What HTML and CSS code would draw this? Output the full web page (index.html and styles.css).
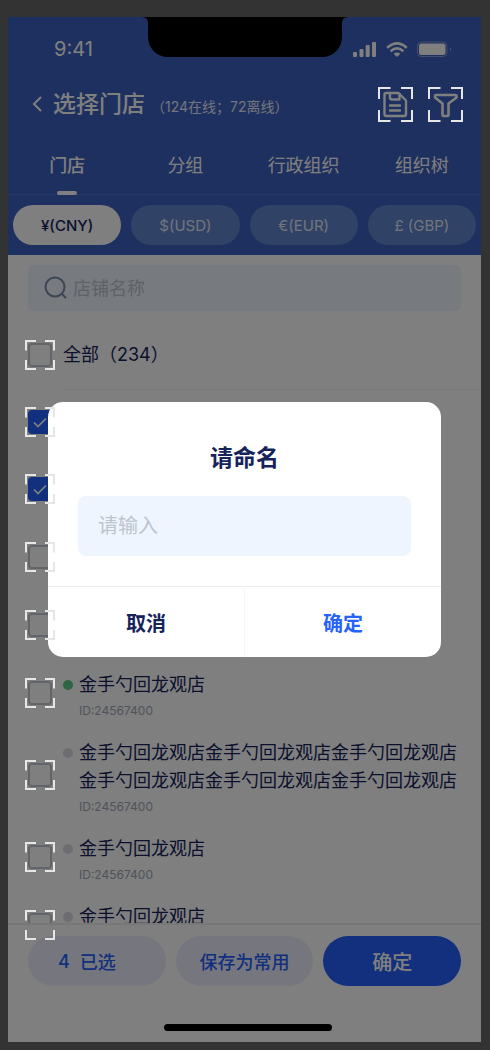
FILE: index.html
```html
<!DOCTYPE html>
<html lang="zh-CN">
<head>
<meta charset="utf-8">
<meta name="viewport" content="width=device-width, initial-scale=1">
<title>选择门店</title>
<link rel="stylesheet" href="styles.css">
</head>
<body>
<svg class="defs" aria-hidden="true">
  <symbol id="corners" viewBox="0 0 30 30"><path d="M1 10.500V1H11M20 1H29V10.500M29 20V29H20M11 29H1V20" fill="none" stroke="currentColor" stroke-width="2"/></symbol>
  <symbol id="corners-large" viewBox="0 0 35 35"><path d="M1 12V1H12.500M23 1H34V12M34 23V34H23M12.500 34H1V23" fill="none" stroke="currentColor" stroke-width="2"/></symbol>
  <symbol id="tick" viewBox="0 0 24 24"><path d="M6 12.500L10 16.500L18 8.500" fill="none" stroke="currentColor" stroke-width="1.700"/></symbol>
</svg>
<div class="phone">
  <header class="header">
    <div class="status">
      <span class="time">9:41</span>
      <svg class="notch" viewBox="0 0 206 40" aria-hidden="true"><path d="M0 0H206Q200 0 200 6V20A20 20 0 0 1 180 40H26A20 20 0 0 1 6 20V6Q6 0 0 0Z"/></svg>
      <svg class="status-icons" viewBox="0 0 99 18" aria-hidden="true">
        <g fill="currentColor">
          <rect x="0" y="12" width="4" height="5" rx="1"/><rect x="6.500" y="9" width="4" height="8" rx="1"/><rect x="12.700" y="5" width="4" height="12" rx="1"/><rect x="19" y="2" width="4" height="15" rx="1"/>
          <rect x="66" y="3.500" width="26.500" height="11.500" rx="2.500"/>
          <path d="M97 7Q99.500 9.200 97 11.500Z" opacity=".4"/>
          <path d="M44 17L40.600 13.800Q44 11 47.400 13.800Z"/>
        </g>
        <rect x="64.500" y="2" width="29.500" height="14.500" rx="4" fill="none" stroke="currentColor" opacity=".4"/>
        <path d="M34.200 7.800Q44-1 53.800 7.800M37.600 11.200Q44 5.500 50.400 11.200" fill="none" stroke="currentColor" stroke-width="2.600"/>
      </svg>
    </div>
    <div class="titlebar">
      <button class="back" aria-label="返回"><svg viewBox="0 0 10 16"><path d="M9 1L2 8L9 15" fill="none" stroke="currentColor" stroke-width="2"/></svg></button>
      <h1 class="title">选择门店</h1>
      <span class="count">（124在线；72离线）</span>
      <div class="tools">
        <button class="tool" aria-label="保存">
          <svg class="glyph" viewBox="0 0 35 35"><g fill="none" stroke="currentColor" stroke-width="2.400" stroke-linejoin="round" stroke-linecap="round"><path d="M8 6H20.500L28 13.500V27Q28 29 26 29H8.500Q6.500 29 6.500 27V7.500Q6.500 6 8 6Z"/><path d="M12 6V10.500Q12 12.500 14 12.500H21.500V7M12 18.500H22M12 23.500H22"/></g></svg>
          <svg class="corners"><use href="#corners-large"/></svg>
        </button>
        <button class="tool" aria-label="筛选">
          <svg class="glyph" viewBox="0 0 35 35"><path d="M8 8H27.500Q28.500 8 28.500 9V10.500L20.500 16.500V28Q20.500 29 19.500 29H15.500Q14.500 29 14.500 28V16.500L7 10.500V9Q7 8 8 8Z" fill="none" stroke="currentColor" stroke-width="2.600" stroke-linejoin="round"/></svg>
          <svg class="corners"><use href="#corners-large"/></svg>
        </button>
      </div>
    </div>
    <nav class="tabs">
      <button class="tab tab-active">门店</button>
      <button class="tab">分组</button>
      <button class="tab">行政组织</button>
      <button class="tab">组织树</button>
    </nav>
    <div class="currencies">
      <button class="currency currency-active">¥(CNY)</button>
      <button class="currency">$(USD)</button>
      <button class="currency">€(EUR)</button>
      <button class="currency">£ (GBP)</button>
    </div>
  </header>

  <main class="content">
    <label class="search">
      <svg class="search-icon" viewBox="0 0 24 24" aria-hidden="true"><g fill="none" stroke="currentColor" stroke-width="2"><circle cx="12" cy="11" r="9.500"/><path d="M18.500 17.500L23 22"/></g></svg>
      <input class="search-input" type="search" placeholder="店铺名称" aria-label="店铺名称">
    </label>

    <div class="all">
      <span class="check"><input class="box" type="checkbox" id="all"><svg class="corners"><use href="#corners"/></svg></span>
      <label class="all-label" for="all">全部（234）</label>
    </div>

    <ul class="stores">
      <li class="store">
        <span class="check"><input class="box" type="checkbox" aria-label="门店 1" checked><svg class="tick"><use href="#tick"/></svg><svg class="corners"><use href="#corners"/></svg></span>
      </li>
      <li class="store">
        <span class="check"><input class="box" type="checkbox" aria-label="门店 2" checked><svg class="tick"><use href="#tick"/></svg><svg class="corners"><use href="#corners"/></svg></span>
      </li>
      <li class="store">
        <span class="check"><input class="box" type="checkbox" aria-label="门店 3"><svg class="corners"><use href="#corners"/></svg></span>
      </li>
      <li class="store">
        <span class="check"><input class="box" type="checkbox" aria-label="门店 4"><svg class="corners"><use href="#corners"/></svg></span>
      </li>
      <li class="store">
        <span class="check"><input class="box" type="checkbox" id="s5"><svg class="corners"><use href="#corners"/></svg></span>
        <label class="info" for="s5"><span class="name online">金手勺回龙观店</span><span class="id">ID:24567400</span></label>
      </li>
      <li class="store">
        <span class="check"><input class="box" type="checkbox" id="s6"><svg class="corners"><use href="#corners"/></svg></span>
        <label class="info" for="s6"><span class="name">金手勺回龙观店金手勺回龙观店金手勺回龙观店金手勺回龙观店金手勺回龙观店金手勺回龙观店</span><span class="id">ID:24567400</span></label>
      </li>
      <li class="store">
        <span class="check"><input class="box" type="checkbox" id="s7"><svg class="corners"><use href="#corners"/></svg></span>
        <label class="info" for="s7"><span class="name">金手勺回龙观店</span><span class="id">ID:24567400</span></label>
      </li>
      <li class="store">
        <span class="check"><input class="box" type="checkbox" id="s8"><svg class="corners"><use href="#corners"/></svg></span>
        <label class="info" for="s8"><span class="name">金手勺回龙观店</span></label>
      </li>
    </ul>
  </main>

  <footer class="footer">
    <div class="footer-actions">
      <button class="pill pill-selected"><span>4</span><span>已选</span></button>
      <button class="pill">保存为常用</button>
      <button class="pill pill-primary">确定</button>
    </div>
  </footer>

  <div class="overlay">
    <form class="modal" role="dialog" aria-labelledby="modal-title">
      <h2 class="modal-title" id="modal-title">请命名</h2>
      <input class="modal-input" type="text" placeholder="请输入" aria-label="请输入">
      <div class="modal-actions">
        <button class="modal-button" type="button">取消</button>
        <button class="modal-button modal-confirm" type="button">确定</button>
      </div>
    </form>
  </div>
  <span class="home-indicator"></span>
</div>
</body>
</html>
```

FILE: styles.css
```css
* { box-sizing: border-box; }

body {
  margin: 0;
  padding: 17px 9px 8px 8px;
  background: #333;
  color: #16235a;
  font-family: Inter, "Noto Sans CJK SC", sans-serif;
}

button, input { margin: 0; padding: 0; border: 0; background: none; color: inherit; font: inherit; }
button { cursor: pointer; }
h1, h2, ul { margin: 0; padding: 0; list-style: none; }
svg { display: block; }
.defs { display: none; }

.phone {
  position: relative;
  display: flex;
  flex-direction: column;
  height: calc(100vh - 25px);
  background: #fff;
  overflow: hidden;
}

/* Header */
.header { flex: none; background: #3c60be; color: #fff; }
.status {
  display: flex;
  align-items: center;
  justify-content: space-between;
  height: 64px;
  padding: 0 29px 0 46px;
}
.time { font-size: 20px; }
.notch {
  position: absolute;
  z-index: 10;
  top: 0;
  left: 50%;
  width: 206px;
  height: 40px;
  transform: translateX(-50%);
  fill: #000;
}
.status-icons { width: 99px; height: 18px; }

.titlebar { display: flex; align-items: center; height: 46px; padding: 0 18px 0 24px; }
.back { padding-right: 11px; }
.back svg { width: 10px; height: 16px; }
.title { font-size: 23px; font-weight: 500; line-height: 32px; }
.count { padding: 6px 0 0 6px; font-size: 14px; line-height: 20px; white-space: nowrap; color: #e4eaf8; }
.tools { display: flex; gap: 15px; margin-left: auto; }
.tool { position: relative; width: 35px; height: 35px; color: #fff; }
.glyph { width: 35px; height: 35px; }
.corners {
  position: absolute;
  z-index: 10;
  top: 0;
  left: 0;
  width: 100%;
  height: 100%;
  color: #e6e6e6;
  pointer-events: none;
}

.tabs { display: flex; border-bottom: 1px solid #5071c6; }
.tab { position: relative; flex: 1; height: 67px; padding-top: 7px; font-size: 18px; }
.tab-active { font-weight: 500; }
.tab-active::after {
  content: "";
  position: absolute;
  bottom: -1px;
  left: 50%;
  width: 20px;
  height: 4px;
  margin-left: -10px;
  border-radius: 2px;
  background: #fff;
}

.currencies { display: flex; gap: 10px; padding: 10px 5px; }
.currency { flex: 1; height: 40px; border-radius: 20px; background: #6084cc; font-size: 15px; color: #e4eaf8; }
.currency-active { background: #fff; color: #16235a; font-weight: 500; }

/* Store list */
.content { flex: 1; min-height: 0; }
.search {
  display: flex;
  align-items: center;
  gap: 6px;
  height: 46px;
  margin: 10px 20px 11px;
  padding: 0 15px;
  border-radius: 5px;
  background: #eef5fe;
}
.search-icon { flex: none; width: 24px; height: 24px; color: #7d8ba5; }
.search-input { flex: 1; min-width: 0; outline: 0; font-size: 18px; }
.search-input::placeholder { color: #bcc4d0; }

.all { display: flex; align-items: center; gap: 8px; height: 66px; padding-left: 17px; }
.all-label { font-size: 18px; line-height: 28px; }

.check { position: relative; flex: none; display: grid; place-items: center; width: 30px; height: 30px; }
.box {
  width: 24px;
  height: 24px;
  border: 2px solid #c3cad3;
  border-radius: 4px;
  appearance: none;
}
.box:checked { border-color: #2460fa; background: #2460fa; }
.tick { position: absolute; top: 3px; left: 3px; width: 24px; height: 24px; color: #fff; pointer-events: none; }

.stores { border-top: 1px solid transparent; }
.store { display: flex; align-items: center; min-height: 68px; padding-left: 17px; }
.store:first-child { min-height: 66px; background: linear-gradient(#f0f0f0, #f0f0f0) 55px 0 / 100% 1px no-repeat; }
.info { flex: 1; padding: 12px 20px 4px 24px; }
.name { position: relative; display: block; font-size: 18px; line-height: 28px; }
.name::before {
  content: "";
  position: absolute;
  top: 9px;
  left: -16px;
  width: 10px;
  height: 10px;
  border-radius: 50%;
  background: #dcdce4;
}
.online::before { background: #5ac882; }
.id { display: block; font-size: 12px; line-height: 24px; color: #a0a8b4; }
.store:last-child .info { padding-bottom: 28px; }

/* Footer */
.footer {
  position: relative;
  z-index: 1;
  flex: none;
  height: 119px;
  padding: 11px 20px 0;
  border-top: 2px solid #f0f0f0;
  background: #fff;
}
.footer-actions { display: grid; grid-template-columns: repeat(3, minmax(0, 1fr)); gap: 10px; }
.pill { height: 50px; border-radius: 25px; background: #eceffd; color: #2460fa; font-size: 18px; font-weight: 500; }
.pill-selected { display: flex; align-items: center; gap: 10px; padding-left: 30px; }
.pill-primary { background: #2460fa; color: #fff; font-size: 20px; }
.home-indicator {
  position: absolute;
  z-index: 10;
  bottom: 11px;
  left: 50%;
  width: 168px;
  height: 7px;
  margin-left: -81px;
  border-radius: 4px;
  background: #000;
}

/* Naming dialog */
.overlay {
  position: absolute;
  z-index: 5;
  inset: 0;
  display: flex;
  align-items: center;
  padding: 0 40px;
  background: rgba(0, 0, 0, .5);
}
.modal { flex: 1; min-width: 0; padding-top: 40px; border-radius: 15px; background: #fff; }
.modal-title { font-size: 23px; font-weight: 600; line-height: 32px; text-align: center; }
.modal-input {
  display: block;
  width: calc(100% - 60px);
  height: 60px;
  margin: 22px 30px 30px;
  padding: 0 20px;
  border-radius: 8px;
  outline: 0;
  background: #eef5fe;
  font-size: 20px;
}
.modal-input::placeholder { color: #bcc4d0; }
.modal-actions { display: flex; border-top: 1px solid #ebedf0; }
.modal-button { flex: 1; height: 70px; font-size: 20px; font-weight: 600; }
.modal-confirm { border-left: 1px solid #f7f7f9; color: #2563fa; }
```
